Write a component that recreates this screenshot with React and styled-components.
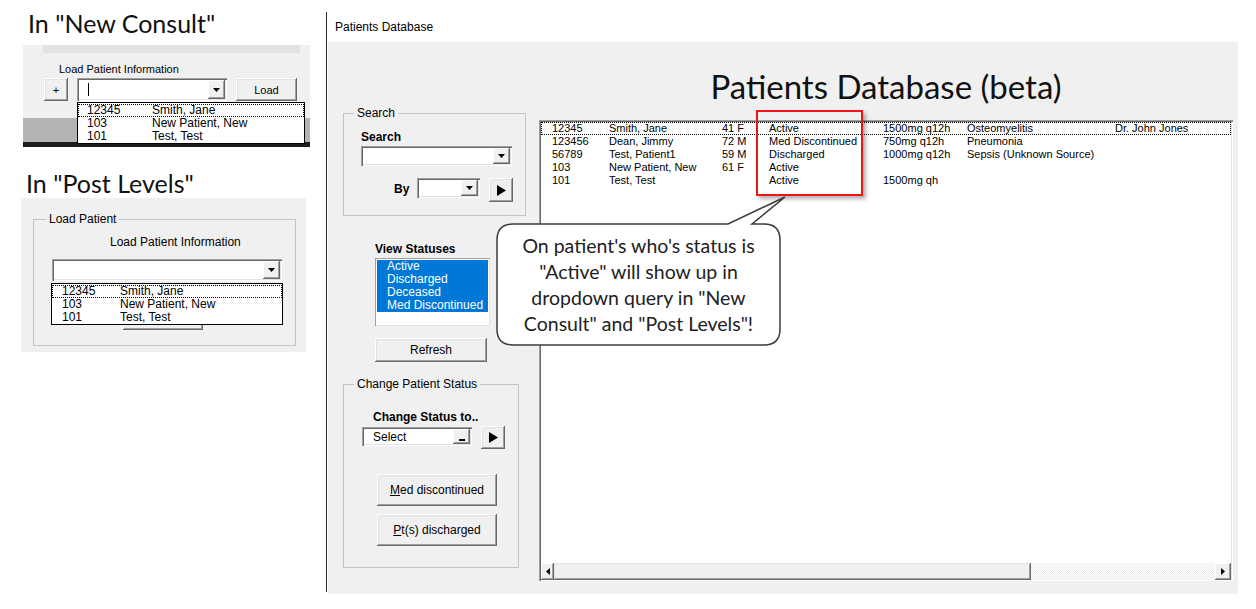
import React from "react";
import styled, { createGlobalStyle } from "styled-components";

const GlobalStyle = createGlobalStyle`
  body {
    margin: 0;
    background: #fff;
    font-family: "Liberation Sans", Arial, sans-serif;
    color: #000;
  }
`;

const consultRows = [
  ["12345", "Smith, Jane"],
  ["103", "New Patient, New"],
  ["101", "Test, Test"],
];

const patients = [
  ["12345", "Smith, Jane", "41 F", "Active", "1500mg q12h", "Osteomyelitis", "Dr. John Jones"],
  ["123456", "Dean, Jimmy", "72 M", "Med Discontinued", "750mg q12h", "Pneumonia", ""],
  ["56789", "Test, Patient1", "59 M", "Discharged", "1000mg q12h", "Sepsis (Unknown Source)", ""],
  ["103", "New Patient, New", "61 F", "Active", "", "", ""],
  ["101", "Test, Test", "", "Active", "1500mg qh", "", ""],
];

const statuses = ["Active", "Discharged", "Deceased", "Med Discontinued"];

const DownArrow = () => (
  <svg width="7" height="4" viewBox="0 0 7 4">
    <polygon points="0,0 7,0 3.5,4" fill="#000" />
  </svg>
);

const PlayArrow = () => (
  <svg width="9" height="11" viewBox="0 0 9 11">
    <polygon points="0,0 9,5.5 0,11" fill="#000" />
  </svg>
);

const SideArrow = ({ dir }) => (
  <svg width="4" height="7" viewBox="0 0 4 7">
    {dir === "left" ? (
      <polygon points="4,0 0,3.5 4,7" fill="#000" />
    ) : (
      <polygon points="0,0 4,3.5 0,7" fill="#000" />
    )}
  </svg>
);

const Combo = ({ width, height, value, dash }) => (
  <ComboBox $w={width} $h={height}>
    <ComboText>{value}</ComboText>
    <DropBtn>{dash ? <Dash /> : <DownArrow />}</DropBtn>
  </ComboBox>
);

export default function App() {
  return (
    <>
      <GlobalStyle />
      <Page>
        <LeftCol>
          <Heading $x={28} $top={8}>In "New Consult"</Heading>
          <ConsultPanel>
            <ConsultTop>
              <TopBar />
              <SmallLabel $ml={36} $mt={9}>Load Patient Information</SmallLabel>
              <ControlRow $mt={2}>
                <WinButton $w={24} $h={23} $ml={21}>+</WinButton>
                <ComboSlot $ml={9}>
                  <Combo width={150} height={23} value={<Caret />} />
                </ComboSlot>
                <WinButton $w={61} $h={23} $ml={9}>Load</WinButton>
              </ControlRow>
            </ConsultTop>
            <GreyStrip />
            <BlackBar />
            <DropList $left={54} $top={57} $w={228} $col={65} $pl={10}>
              {consultRows.map((r, i) => (
                <DropRow key={r[0]} $focus={i === 0}>
                  <span>{r[0]}</span>
                  <span>{r[1]}</span>
                </DropRow>
              ))}
            </DropList>
          </ConsultPanel>

          <Heading $x={26} $top={21}>In "Post Levels"</Heading>
          <PostPanel>
            <GroupBox $w={263} $ml={12}>
              <Legend $ml={12}>Load Patient</Legend>
              <SmallLabel $ml={76} $mt={9} $size={12}>Load Patient Information</SmallLabel>
              <ComboSlot $ml={18} $mt={10}>
                <Combo width={230} height={22} value="" />
              </ComboSlot>
              <WinButton $w={80} $h={24} $ml={89} $mt={25} />
            </GroupBox>
            <DropList $left={30} $top={85} $w={232} $col={58} $pl={11}>
              {consultRows.map((r, i) => (
                <DropRow key={r[0]} $focus={i === 0}>
                  <span>{r[0]}</span>
                  <span>{r[1]}</span>
                </DropRow>
              ))}
            </DropList>
          </PostPanel>
        </LeftCol>

        <Separator />

        <Window>
          <WinTitle>Patients Database</WinTitle>
          <WinBody>
            <SideCol>
              <GroupBox $w={183} $mt={64} $pb={13}>
                <Legend $ml={10}>Search</Legend>
                <BoldLabel $ml={17} $mt={10}>Search</BoldLabel>
                <ComboSlot $ml={17} $mt={2}>
                  <Combo width={151} height={20} value="" />
                </ComboSlot>
                <ControlRow $mt={12}>
                  <BoldLabel $ml={50} $mt={0} $lh={22}>By</BoldLabel>
                  <ComboSlot $ml={8}>
                    <Combo width={63} height={20} value="" />
                  </ComboSlot>
                  <WinButton $w={24} $h={24} $ml={9}>
                    <PlayArrow />
                  </WinButton>
                </ControlRow>
              </GroupBox>

              <BoldLabel $ml={32} $mt={26}>View Statuses</BoldLabel>
              <StatusList>
                {statuses.map((s) => (
                  <StatusItem key={s}>{s}</StatusItem>
                ))}
              </StatusList>
              <WinButton $w={112} $h={24} $ml={32} $mt={12} $seg>
                Refresh
              </WinButton>

              <GroupBox $w={176} $mt={15} $pb={21}>
                <Legend $ml={10}>Change Patient Status</Legend>
                <BoldLabel $ml={29} $mt={19}>Change Status to..</BoldLabel>
                <ControlRow $mt={2}>
                  <ComboSlot $ml={18} $mt={1}>
                    <Combo width={110} height={19} value="Select" dash />
                  </ComboSlot>
                  <WinButton $w={24} $h={23} $ml={9}>
                    <PlayArrow />
                  </WinButton>
                </ControlRow>
                <WinButton $w={120} $h={32} $ml={33} $mt={25} $seg>
                  <u>M</u>ed discontinued
                </WinButton>
                <WinButton $w={120} $h={32} $ml={33} $mt={8} $seg>
                  <u>P</u>t(s) discharged
                </WinButton>
              </GroupBox>
            </SideCol>

            <MainCol>
              <BigTitle>Patients Database (beta)</BigTitle>
              <ListBox>
                <Rows>
                  {patients.map((p, i) => (
                    <PatientRow key={p[0]} $focus={i === 0}>
                      {p.map((c, j) => (
                        <span key={j}>{c}</span>
                      ))}
                    </PatientRow>
                  ))}
                </Rows>
                <HScroll>
                  <ScrollBtn $w={13}>
                    <SideArrow dir="left" />
                  </ScrollBtn>
                  <Thumb />
                  <Track />
                  <ScrollBtn $w={16}>
                    <SideArrow dir="right" />
                  </ScrollBtn>
                </HScroll>
              </ListBox>
            </MainCol>

            <Highlight />
            <Callout>
              <svg width="292" height="152" viewBox="0 0 292 152">
                <path
                  d="M17,29 H232 L289,2 L256,29 H268 Q284,29 284,45 V134 Q284,150 268,150 H17 Q1,150 1,134 V45 Q1,29 17,29 Z"
                  fill="#fff"
                  stroke="#3c3c3c"
                  strokeWidth="1.5"
                />
              </svg>
              <CalloutText>
                On patient's who's status is
                <br />
                "Active" will show up in
                <br />
                dropdown query in "New
                <br />
                Consult" and "Post Levels"!
              </CalloutText>
            </Callout>
          </WinBody>
        </Window>
      </Page>
    </>
  );
}

const Page = styled.div`
  display: flex;
  width: 1256px;
  height: 609px;
  overflow: hidden;
`;

const LeftCol = styled.div`
  width: 326px;
  flex-shrink: 0;
  display: flex;
  flex-direction: column;
`;

const Heading = styled.div`
  font-family: Lato, "Noto Sans", sans-serif;
  font-size: 25px;
  line-height: 30px;
  margin-left: ${({ $x }) => $x}px;
  margin-top: ${({ $top }) => $top}px;
  color: #111;
`;

const ConsultPanel = styled.div`
  position: relative;
  width: 287px;
  margin-left: 23px;
  margin-top: 7px;
`;

const ConsultTop = styled.div`
  height: 73px;
  background: #f0f0f0;
  display: flex;
  flex-direction: column;
`;

const TopBar = styled.div`
  margin-left: 20px;
  width: 257px;
  height: 8px;
  background: #e3e3e3;
`;

const SmallLabel = styled.div`
  font-size: ${({ $size }) => $size || 11}px;
  line-height: 14px;
  margin-left: ${({ $ml }) => $ml || 0}px;
  margin-top: ${({ $mt }) => $mt || 0}px;
  white-space: nowrap;
`;

const ControlRow = styled.div`
  display: flex;
  align-items: flex-start;
  margin-top: ${({ $mt }) => $mt || 0}px;
`;

const ComboSlot = styled.div`
  margin-left: ${({ $ml }) => $ml || 0}px;
  margin-top: ${({ $mt }) => $mt || 0}px;
`;

const WinButton = styled.button`
  display: flex;
  align-items: center;
  justify-content: center;
  width: ${({ $w }) => $w}px;
  height: ${({ $h }) => $h}px;
  margin: ${({ $mt }) => $mt || 0}px 0 0 ${({ $ml }) => $ml || 0}px;
  padding: 0;
  border: none;
  background: #f0f0f0;
  box-shadow: inset -1px -1px #696969, inset 1px 1px #fff, inset -2px -2px #a0a0a0,
    inset 2px 2px #e3e3e3;
  font-family: "Liberation Sans", Arial, sans-serif;
  font-size: ${({ $seg }) => ($seg ? 12 : 11)}px;
  color: #000;
  flex-shrink: 0;
  u {
    text-decoration: underline;
  }
`;

const ComboBox = styled.div`
  display: flex;
  align-items: stretch;
  width: ${({ $w }) => $w}px;
  height: ${({ $h }) => $h}px;
  box-sizing: border-box;
  padding: 2px;
  background: #fff;
  box-shadow: inset 1px 1px #a0a0a0, inset 2px 2px #696969, inset -1px -1px #fff,
    inset -2px -2px #e3e3e3;
`;

const ComboText = styled.div`
  flex: 1;
  display: flex;
  align-items: center;
  padding-left: 9px;
  font-size: 12px;
`;

const Caret = styled.span`
  display: inline-block;
  width: 1px;
  height: 13px;
  background: #000;
`;

const DropBtn = styled.div`
  width: 17px;
  display: flex;
  align-items: center;
  justify-content: center;
  background: #f0f0f0;
  box-shadow: inset -1px -1px #696969, inset 1px 1px #fff, inset -2px -2px #a0a0a0;
`;

const Dash = styled.span`
  display: block;
  width: 6px;
  height: 2px;
  background: #000;
  margin-top: 7px;
`;

const GreyStrip = styled.div`
  height: 24px;
  background: #b4b4b4;
`;

const BlackBar = styled.div`
  height: 5px;
  background: #1c1c1c;
`;

const DropList = styled.div`
  position: absolute;
  left: ${({ $left }) => $left}px;
  top: ${({ $top }) => $top}px;
  width: ${({ $w }) => $w}px;
  box-sizing: border-box;
  border: 1px solid #000;
  background: #fff;
  padding: 1px 0 0;
  --col: ${({ $col }) => $col}px;
  --pl: ${({ $pl }) => $pl}px;
`;

const DropRow = styled.div`
  display: grid;
  grid-template-columns: var(--col) 1fr;
  padding-left: calc(var(--pl) - 1px);
  height: 13px;
  line-height: 13px;
  font-size: 12px;
  outline: ${({ $focus }) => ($focus ? "1px dotted #000" : "none")};
  outline-offset: -1px;
`;

const PostPanel = styled.div`
  position: relative;
  width: 285px;
  margin-left: 21px;
  padding: 14px 0 6px;
  background: #f0f0f0;
`;

const GroupBox = styled.fieldset`
  width: ${({ $w }) => $w}px;
  box-sizing: border-box;
  margin: ${({ $mt }) => $mt || 0}px 0 0 ${({ $ml }) => $ml || 0}px;
  padding: 0 0 ${({ $pb }) => $pb || 15}px;
  min-width: 0;
  border: 1px solid #c4c4c4;
  display: flex;
  flex-direction: column;
  align-items: flex-start;
`;

const Legend = styled.legend`
  margin-left: ${({ $ml }) => $ml}px;
  padding: 0 3px;
  font-size: 12px;
  line-height: 14px;
  color: #000;
`;

const Separator = styled.div`
  width: 1px;
  height: 580px;
  margin-top: 12px;
  background: #2b2b2b;
  flex-shrink: 0;
`;

const Window = styled.div`
  margin-left: 1px;
  margin-top: 12px;
  width: 910px;
  display: flex;
  flex-direction: column;
`;

const WinTitle = styled.div`
  height: 30px;
  line-height: 30px;
  padding-left: 7px;
  font-size: 12px;
`;

const WinBody = styled.div`
  position: relative;
  height: 552px;
  background: #f0f0f0;
  display: flex;
  padding-left: 15px;
`;

const SideCol = styled.div`
  width: 183px;
  display: flex;
  flex-direction: column;
  align-items: flex-start;
`;

const BoldLabel = styled.div`
  font-weight: bold;
  font-size: 12px;
  line-height: ${({ $lh }) => $lh || 14}px;
  margin-left: ${({ $ml }) => $ml || 0}px;
  margin-top: ${({ $mt }) => $mt || 0}px;
  white-space: nowrap;
`;

const StatusList = styled.div`
  width: 115px;
  height: 68px;
  box-sizing: border-box;
  margin: 2px 0 0 32px;
  padding: 2px 2px 0;
  background: #fff;
  box-shadow: inset 1px 1px #a0a0a0, inset -1px -1px #e3e3e3;
`;

const StatusItem = styled.div`
  height: 13px;
  line-height: 13px;
  padding-left: 10px;
  font-size: 12px;
  background: #0078d7;
  color: #fff;
  white-space: nowrap;
`;

const MainCol = styled.div`
  margin-left: 13px;
  width: 694px;
  display: flex;
  flex-direction: column;
`;

const BigTitle = styled.div`
  height: 78px;
  box-sizing: border-box;
  padding-top: 24px;
  line-height: 40px;
  text-align: center;
  font-family: Lato, "Noto Sans", sans-serif;
  font-size: 33px;
  color: #111;
`;

const ListBox = styled.div`
  height: 461px;
  box-sizing: border-box;
  padding: 2px 2px 1px;
  background: #fff;
  box-shadow: inset 1px 1px #a0a0a0, inset 2px 2px #696969, inset -1px -1px #fff,
    inset -2px -2px #e3e3e3;
  display: flex;
  flex-direction: column;
`;

const Rows = styled.div`
  flex: 1;
`;

const PatientRow = styled.div`
  display: grid;
  grid-template-columns: 57px 113px 47px 114px 84px 148px 1fr;
  padding-left: 11px;
  height: 13px;
  line-height: 13px;
  font-size: 11px;
  white-space: nowrap;
  outline: ${({ $focus }) => ($focus ? "1px dotted #000" : "none")};
  outline-offset: -1px;
`;

const HScroll = styled.div`
  height: 17px;
  display: flex;
`;

const ScrollBtn = styled.div`
  width: ${({ $w }) => $w}px;
  display: flex;
  align-items: center;
  justify-content: center;
  background: #f0f0f0;
  box-shadow: inset -1px -1px #696969, inset 1px 1px #fff, inset -2px -2px #a0a0a0;
`;

const Thumb = styled.div`
  width: 477px;
  background: #f0f0f0;
  box-shadow: inset -1px -1px #696969, inset 1px 1px #e3e3e3, inset -2px -2px #a0a0a0;
`;

const Track = styled.div`
  flex: 1;
  background: repeating-conic-gradient(#fff 0 25%, #ececec 0 50%) 0 0 / 2px 2px;
`;

const Highlight = styled.div`
  position: absolute;
  left: 428px;
  top: 68px;
  width: 107px;
  height: 86px;
  box-sizing: border-box;
  border: 2px solid #f01414;
  box-shadow: 3px 3px 4px rgba(0, 0, 0, 0.3);
`;

const Callout = styled.div`
  position: absolute;
  left: 168px;
  top: 153px;
  width: 292px;
  height: 152px;
  svg {
    display: block;
  }
`;

const CalloutText = styled.div`
  position: absolute;
  left: 1px;
  top: 29px;
  width: 283px;
  height: 121px;
  display: flex;
  align-items: center;
  justify-content: center;
  text-align: center;
  font-family: Lato, "Noto Sans", sans-serif;
  font-size: 19.5px;
  line-height: 26px;
  color: #222;
`;
